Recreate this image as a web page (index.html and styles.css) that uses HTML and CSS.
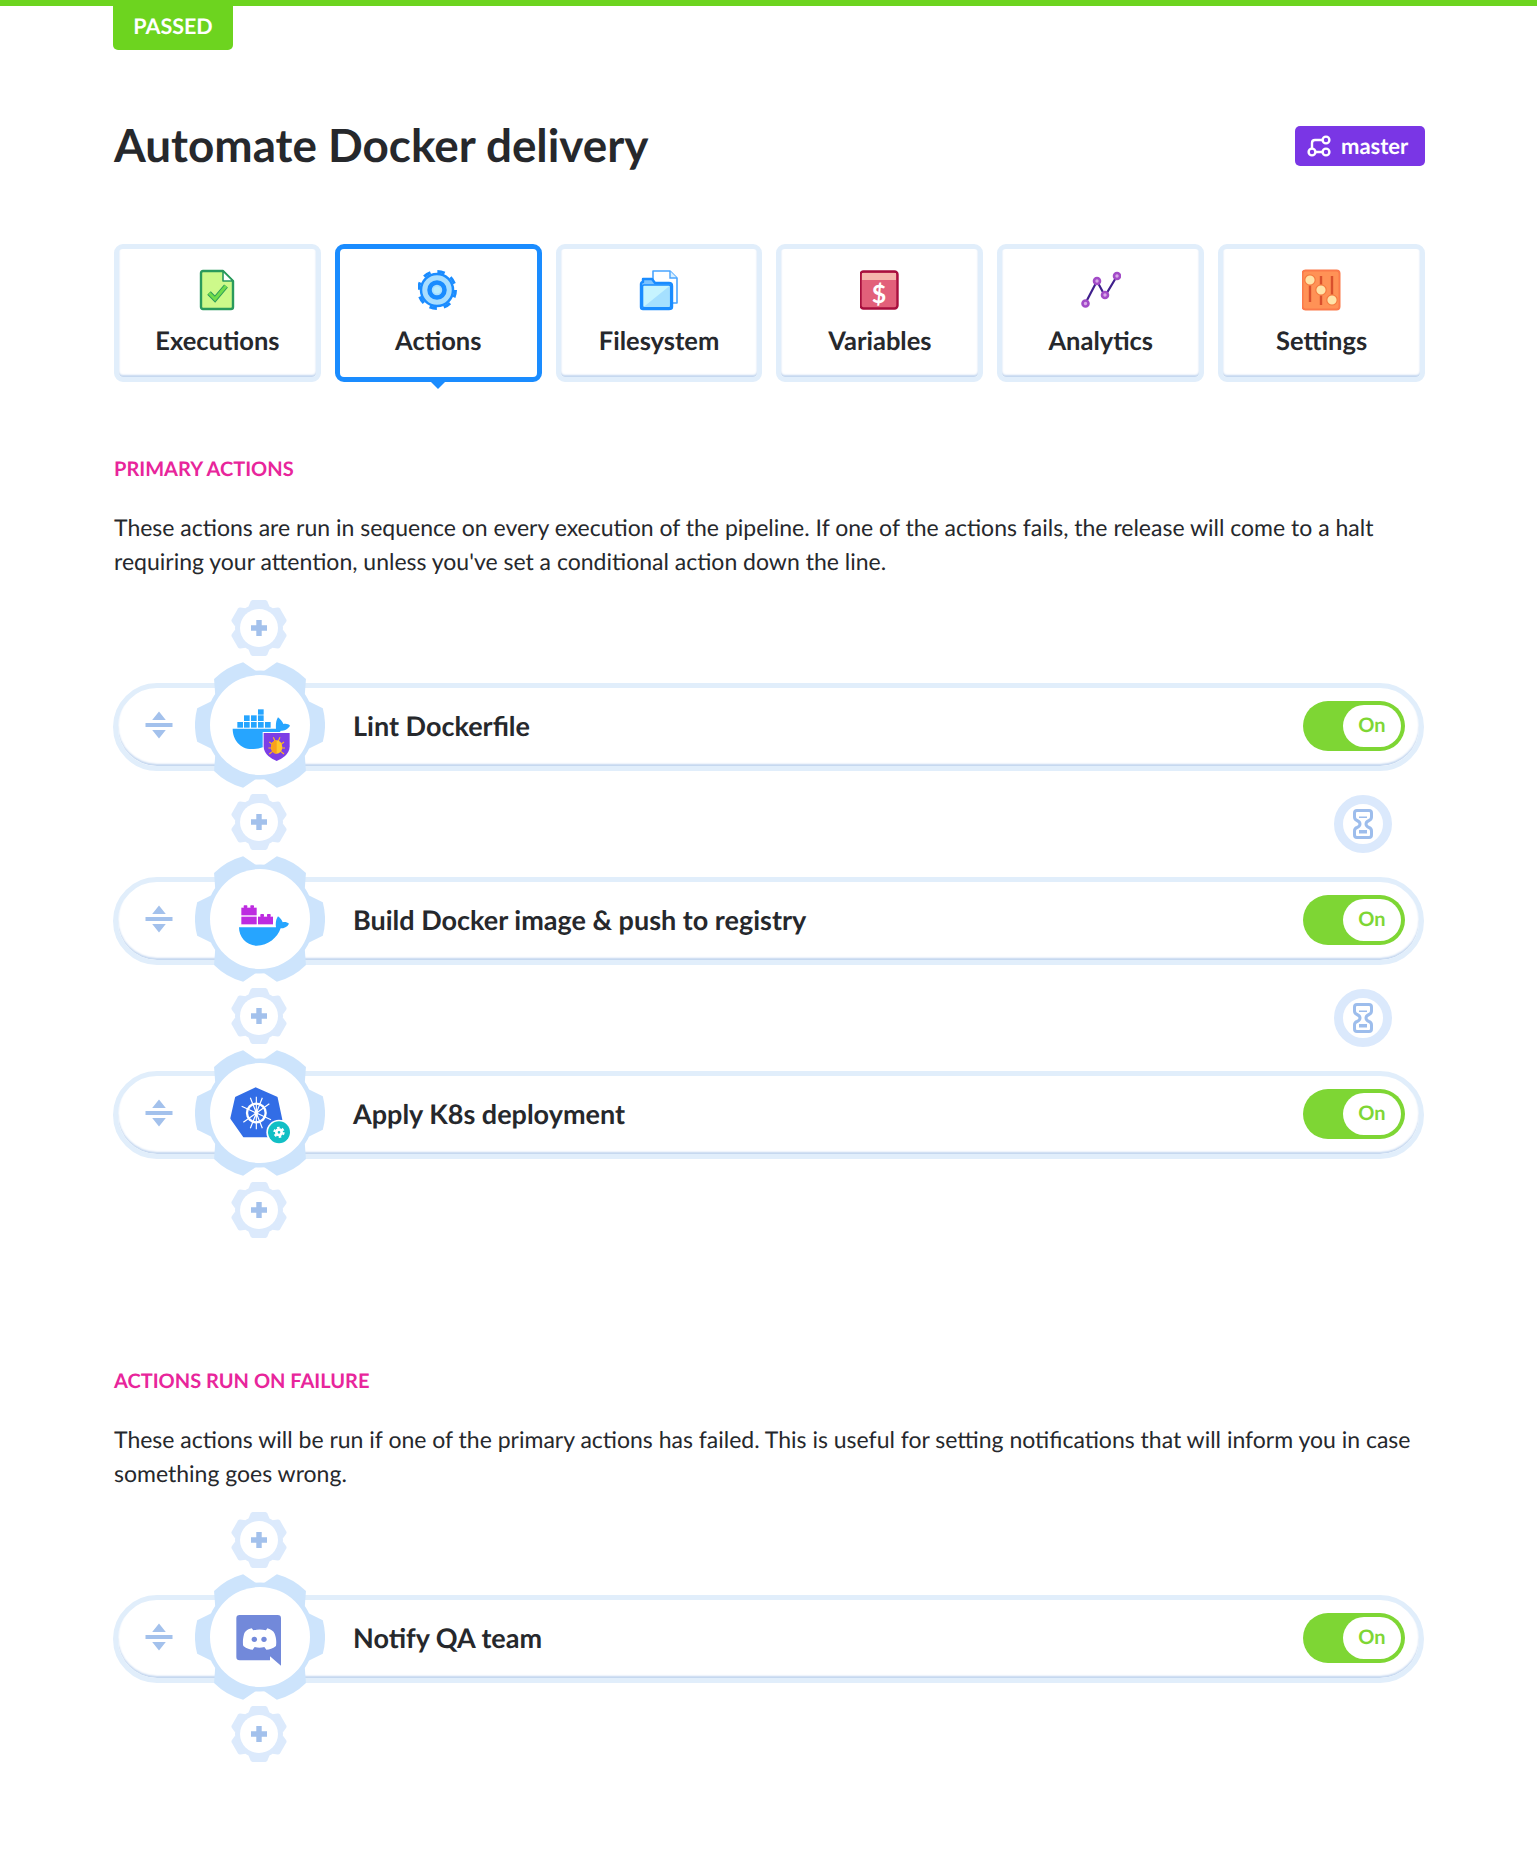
FILE: index.html
```html
<!DOCTYPE html>
<html lang="en">
<head>
<meta charset="utf-8">
<title>Automate Docker delivery</title>
<link rel="stylesheet" href="styles.css">
</head>
<body>
<svg class="defs" width="0" height="0" aria-hidden="true">
  <defs>
    <path id="big-tooth" d="M48.5 -23.7L62.8 -16.8A65 65 0 0 1 62.8 16.8L48.5 23.7Z"/>
    <g id="big-gear">
      <circle r="54.5" fill="#cde4fc"/>
      <use href="#big-tooth" fill="#cde4fc"/>
      <use href="#big-tooth" fill="#cde4fc" transform="rotate(60)"/>
      <use href="#big-tooth" fill="#cde4fc" transform="rotate(120)"/>
      <use href="#big-tooth" fill="#cde4fc" transform="rotate(180)"/>
      <use href="#big-tooth" fill="#cde4fc" transform="rotate(240)"/>
      <use href="#big-tooth" fill="#cde4fc" transform="rotate(300)"/>
      <circle r="50" fill="#fff"/>
    </g>
    <path id="small-tooth" d="M21.4 -10.5L26.4 -8.4Q27.8 -7.8 27.9 -6.3L27.9 6.3Q27.8 7.8 26.4 8.4L21.4 10.5Z"/>
    <symbol id="add-gear" viewBox="-29 -29 58 58">
      <circle r="24" fill="#dceafc"/>
      <use href="#small-tooth" fill="#dceafc" transform="rotate(30)"/>
      <use href="#small-tooth" fill="#dceafc" transform="rotate(90)"/>
      <use href="#small-tooth" fill="#dceafc" transform="rotate(150)"/>
      <use href="#small-tooth" fill="#dceafc" transform="rotate(210)"/>
      <use href="#small-tooth" fill="#dceafc" transform="rotate(270)"/>
      <use href="#small-tooth" fill="#dceafc" transform="rotate(330)"/>
      <circle r="19" fill="#fff"/>
      <path d="M-2.7 -8H2.7V-2.7H8V2.7H2.7V8H-2.7V2.7H-8V-2.7H-2.7Z" fill="#a3c1ec"/>
    </symbol>
    <symbol id="sort" viewBox="0 0 28 28">
      <path d="M14 0.5L20.8 9H7.2Z M0.5 12H27.5V16H0.5Z M7.2 19H20.8L14 27.5Z" fill="#a3c1ec"/>
    </symbol>
    <symbol id="hourglass" viewBox="0 0 20 30">
      <path d="M4 1.5H16Q18.5 1.5 18.5 4V8Q18.5 10.5 16 11.5Q13 12.8 13 15Q13 17.2 16 18.5Q18.5 19.5 18.5 22V26Q18.5 28.5 16 28.5H4Q1.5 28.5 1.5 26V22Q1.5 19.5 4 18.5Q7 17.2 7 15Q7 12.8 4 11.5Q1.5 10.5 1.5 8V4Q1.5 1.5 4 1.5Z" fill="#fff" stroke="#9dbdec" stroke-width="3"/>
      <path d="M6 7.5H14V9H6Z M6 21H14V24.5H6Z" fill="#9dbdec"/>
    </symbol>
  </defs>
</svg>

<div class="topbar"></div>
<main class="page">
  <div class="status">PASSED</div>

  <header class="header">
    <h1 class="title">Automate Docker delivery</h1>
    <div class="branch">
      <svg class="branch-icon" viewBox="0 0 24 22">
        <g fill="none" stroke="#fff" stroke-width="2.4">
          <circle cx="19" cy="5" r="3.4"/>
          <circle cx="5" cy="17" r="3.4"/>
          <circle cx="19" cy="17" r="3.4"/>
          <path d="M8.4 17H15.6M15.6 5H8Q5 5 5 8V13.6"/>
        </g>
      </svg>
      <span>master</span>
    </div>
  </header>

  <nav class="tabs">
    <div class="tab">
      <svg class="tab-icon" viewBox="0 0 40 44">
        <path d="M8 3H26L36 13V39Q36 41 34 41H6Q4 41 4 39V5Q4 3 6 3Z" fill="#cdf98a" stroke="#2a9a5c" stroke-width="2.4" stroke-linejoin="round"/>
        <path d="M26 3V13H36Z" fill="#fff" stroke="#2a9a5c" stroke-width="1.6" stroke-linejoin="round"/>
        <path d="M12 25L18 31L29 18" fill="none" stroke="#2a9a5c" stroke-width="5"/>
        <path d="M12 25L18 31L29 18" fill="none" stroke="#6fdc4a" stroke-width="3"/>
      </svg>
      <span class="tab-label">Executions</span>
    </div>
    <div class="tab tab-active">
      <svg class="tab-icon" viewBox="0 0 40 44">
        <g transform="translate(19 22)">
          <circle r="16" fill="#a8deff" stroke="#1a8cff" stroke-width="2.5"/>
          <circle r="18.5" fill="none" stroke="#1a8cff" stroke-width="3" stroke-dasharray="7.5 7"/>
          <circle r="12.5" fill="#a8deff"/>
          <circle r="7.5" fill="#a8deff" stroke="#1a8cff" stroke-width="4.5"/>
          <circle r="3.6" fill="#b8ecff"/>
        </g>
      </svg>
      <span class="tab-label">Actions</span>
    </div>
    <div class="tab">
      <svg class="tab-icon" viewBox="0 0 40 44">
        <path d="M14 3H31L38 10V35H14Z" fill="#fff" stroke="#4aa5ff" stroke-width="1.6" stroke-linejoin="round"/>
        <path d="M31 3V10H38" fill="#d9f0ff" stroke="#4aa5ff" stroke-width="1.4"/>
        <path d="M4 14Q2 14 2 16V39Q2 41 4 41H30Q33 41 33 39V18Q33 15 30 15H16L13 11H4Z" fill="#7cc3ff" stroke="#1a8cff" stroke-width="2.4" stroke-linejoin="round"/>
        <rect x="3.5" y="17" width="28" height="22.5" rx="1.5" fill="#c6f4ff" stroke="#1a8cff" stroke-width="1.6"/>
        <path d="M4.5 39L30.5 18V39Z" fill="#a5e0ff"/>
      </svg>
      <span class="tab-label">Filesystem</span>
    </div>
    <div class="tab">
      <svg class="tab-icon" viewBox="0 0 40 44">
        <rect x="0.5" y="3.5" width="37" height="37" rx="3" fill="#e2607a" stroke="#a80f3e" stroke-width="2.4"/>
        <rect x="2" y="5" width="34" height="7" fill="#f6b5ad"/>
        <text class="dollar" x="19" y="35" text-anchor="middle">$</text>
      </svg>
      <span class="tab-label">Variables</span>
    </div>
    <div class="tab">
      <svg class="tab-icon" viewBox="0 0 40 44">
        <path d="M4 36L16 13L24 28L36 8" fill="none" stroke="#3f1f8c" stroke-width="2.2"/>
        <g fill="#d8a8e8" stroke="#a24bc7" stroke-width="2.6">
          <circle cx="4.5" cy="35.5" r="3"/>
          <circle cx="16" cy="13" r="3"/>
          <circle cx="24" cy="27" r="3"/>
          <circle cx="36" cy="8" r="3"/>
        </g>
      </svg>
      <span class="tab-label">Analytics</span>
    </div>
    <div class="tab">
      <svg class="tab-icon" viewBox="0 0 40 44">
        <rect x="0.5" y="2.5" width="37" height="39" rx="3" fill="#ff9256" stroke="#fb7a4a" stroke-width="2"/>
        <path d="M8 8V34M19 8V37M30 8V37" stroke="#d9502d" stroke-width="2.4"/>
        <g fill="#ffe3a8" stroke="#f57a3f" stroke-width="1.2">
          <circle cx="8" cy="12" r="5.2"/>
          <circle cx="19" cy="22" r="5.2"/>
          <circle cx="30" cy="32" r="5.2"/>
        </g>
      </svg>
      <span class="tab-label">Settings</span>
    </div>
  </nav>

  <section class="section section-primary">
    <h2 class="section-title">PRIMARY ACTIONS</h2>
    <p class="section-text">These actions are run in sequence on every execution of the pipeline. If one of the actions fails, the release will come to a halt requiring your attention, unless you've set a conditional action down the line.</p>

    <div class="link"><svg class="add"><use href="#add-gear"/></svg></div>

    <div class="action">
      <svg class="sort"><use href="#sort"/></svg>
      <svg class="action-gear" viewBox="-65 -65 130 130">
        <use href="#big-gear"/>
        <g transform="scale(0.3333) translate(-480 -401)">
          <path d="M398 412H528C527 398 528 388 534 378C541 384 548 392 550 398C558 396 566 398 570 403C564 414 552 418 542 418C528 450 495 473 455 473C420 473 398 445 398 412Z" fill="#26a5ff"/>
          <g fill="#26a5ff">
            <rect x="412" y="392" width="17" height="17"/><rect x="432" y="392" width="17" height="17"/><rect x="453" y="392" width="17" height="17"/><rect x="474" y="392" width="17" height="17"/><rect x="495" y="392" width="17" height="17"/>
            <rect x="432" y="372" width="17" height="17"/><rect x="453" y="372" width="17" height="17"/><rect x="474" y="372" width="17" height="17"/>
            <rect x="474" y="354" width="17" height="16"/>
          </g>
          <path d="M491 425H569V465C569 490 545 503 530 509C515 503 491 490 491 465Z" fill="#7c3ee6" stroke="#fff" stroke-width="6" paint-order="stroke"/>
          <path d="M508 452L518 460M552 452L542 460M505 470H515M555 470H545M508 488L518 480M552 488L542 480M520 438L525 449M540 438L535 449" stroke="#ffb818" stroke-width="3.5" fill="none"/>
          <ellipse cx="530" cy="467" rx="17" ry="20" fill="#ffc72a"/>
          <path d="M530 447A17 20 0 0 0 530 487Z" fill="#f9a11b"/>
        </g>
      </svg>
      <span class="action-name">Lint Dockerfile</span>
      <div class="toggle"><span class="toggle-knob">On</span></div>
    </div>

    <div class="link">
      <svg class="add"><use href="#add-gear"/></svg>
      <span class="wait"><svg class="wait-icon"><use href="#hourglass"/></svg></span>
    </div>

    <div class="action">
      <svg class="sort"><use href="#sort"/></svg>
      <svg class="action-gear" viewBox="-65 -65 130 130">
        <use href="#big-gear"/>
        <g transform="scale(0.3333) translate(-210 -172)">
          <path d="M147 197H258C256 185 258 172 264 164C272 170 276 176 278 182C285 180 292 182 297 186C292 196 282 200 272 200C262 228 235 252 200 252C168 252 147 225 147 197Z" fill="#26a5ff"/>
          <g fill="#bd2be0">
            <rect x="154" y="138" width="46" height="23"/><rect x="161" y="131" width="11" height="8" rx="2"/><rect x="181" y="131" width="11" height="8" rx="2"/>
            <rect x="154" y="165" width="46" height="23"/>
            <rect x="204" y="165" width="45" height="23"/><rect x="211" y="157" width="11" height="9" rx="2"/><rect x="231" y="157" width="11" height="9" rx="2"/>
          </g>
        </g>
      </svg>
      <span class="action-name">Build Docker image &amp; push to registry</span>
      <div class="toggle"><span class="toggle-knob">On</span></div>
    </div>

    <div class="link">
      <svg class="add"><use href="#add-gear"/></svg>
      <span class="wait"><svg class="wait-icon"><use href="#hourglass"/></svg></span>
    </div>

    <div class="action">
      <svg class="sort"><use href="#sort"/></svg>
      <svg class="action-gear" viewBox="-65 -65 130 130">
        <use href="#big-gear"/>
        <g transform="scale(0.3333) translate(-210 -192)">
          <path d="M197 118L260 146L274 212L235 262H162L124 208L138 146Z" fill="#326de6" stroke="#326de6" stroke-width="6" stroke-linejoin="round"/>
          <g fill="none" stroke="#fff">
            <circle cx="199" cy="192" r="28" stroke-width="7"/>
            <path d="M199 143V241M155 172L243 212M160 220L238 164M181 238L217 146M217 238L181 146" stroke-width="3.5"/>
          </g>
          <circle cx="199" cy="192" r="6" fill="#fff"/>
          <circle cx="267" cy="250" r="38" fill="#fff"/>
          <circle cx="267" cy="250" r="33" fill="#12bfc5"/>
          <circle cx="267" cy="250" r="8" fill="none" stroke="#fff" stroke-width="8"/>
          <circle cx="267" cy="250" r="14" fill="none" stroke="#fff" stroke-width="6" stroke-dasharray="7.5 7.16"/>
        </g>
      </svg>
      <span class="action-name">Apply K8s deployment</span>
      <div class="toggle"><span class="toggle-knob">On</span></div>
    </div>

    <div class="link"><svg class="add"><use href="#add-gear"/></svg></div>
  </section>

  <section class="section section-failure">
    <h2 class="section-title">ACTIONS RUN ON FAILURE</h2>
    <p class="section-text">These actions will be run if one of the primary actions has failed. This is useful for setting notifications that will inform you in case something goes wrong.</p>

    <div class="link"><svg class="add"><use href="#add-gear"/></svg></div>

    <div class="action">
      <svg class="sort"><use href="#sort"/></svg>
      <svg class="action-gear" viewBox="-65 -65 130 130">
        <use href="#big-gear"/>
        <g transform="scale(0.3333) translate(-210 -198)">
          <path d="M149 132H263Q273 132 273 142V284L240 256V268H149Q139 268 139 258V142Q139 132 149 132Z" fill="#7289da"/>
          <path d="M185 172C170 176 165 182 162 190C158 205 158 218 160 225C170 233 180 236 188 236L194 228C205 231 212 231 223 228L229 236C238 236 248 233 258 225C260 210 258 198 254 188C250 180 244 176 232 172L228 178C215 175 202 175 190 178Z" fill="#fff"/>
          <circle cx="193" cy="205" r="8" fill="#7289da"/>
          <circle cx="222" cy="205" r="8" fill="#7289da"/>
        </g>
      </svg>
      <span class="action-name">Notify QA team</span>
      <div class="toggle"><span class="toggle-knob">On</span></div>
    </div>

    <div class="link"><svg class="add"><use href="#add-gear"/></svg></div>
  </section>
</main>
</body>
</html>
```

FILE: styles.css
```css
* { box-sizing: border-box; }

html, body { margin: 0; padding: 0; background: #fff; }

body {
  font-family: "Lato", "Liberation Sans", sans-serif;
  color: #26282c;
  min-height: 1870px;
  text-rendering: geometricPrecision;
}

.defs { position: absolute; }

.topbar { height: 6px; background: #6dd41f; }

.page { padding: 0 112px 0 114px; }

.status {
  width: 120px;
  height: 44px;
  margin-left: -1px;
  border-radius: 0 0 5px 5px;
  background: #6dd41f;
  color: #fff;
  font-size: 21.5px;
  font-weight: 700;
  line-height: 40px;
  text-align: center;
}

.header {
  display: flex;
  align-items: center;
  justify-content: space-between;
  margin-top: 64px;
  height: 62px;
}

.title {
  margin: 0;
  font-size: 45.8px;
  font-weight: 700;
  line-height: 62px;
}

.branch {
  display: flex;
  align-items: center;
  gap: 10px;
  width: 130px;
  height: 40px;
  margin-top: 1px;
  padding-left: 12px;
  border-radius: 5px;
  background: #7a36e5;
  color: #fff;
  font-size: 22px;
  font-weight: 700;
}

.branch-icon { width: 24px; height: 22px; }

.tabs {
  display: flex;
  gap: 14px;
  margin-top: 68px;
}

.tab {
  position: relative;
  display: flex;
  flex: 1 1 0;
  flex-direction: column;
  align-items: center;
  height: 138px;
  padding-top: 19px;
  border: 5px solid #e1eefb;
  border-radius: 9px;
  background: #fff;
  box-shadow: inset 0 -2px 2px #c3d6ef;
}

.tab-active {
  border-color: #1a8cff;
  box-shadow: none;
}

.tab-active::after {
  content: "";
  position: absolute;
  left: 50%;
  bottom: -12px;
  margin-left: -7px;
  border-width: 7px 7px 0;
  border-style: solid;
  border-color: #1a8cff transparent transparent;
}

.tab-icon { width: 40px; height: 44px; }

.tab-label {
  margin-top: 12px;
  font-size: 25.5px;
  font-weight: 700;
  line-height: 34px;
}

.dollar {
  fill: #fff;
  font-family: "Lato", sans-serif;
  font-size: 25px;
  font-weight: 700;
}

.section-primary { margin-top: 75px; }
.section-failure { margin-top: 104px; }

.section-title {
  margin: 0;
  color: #e8259b;
  font-size: 20px;
  font-weight: 700;
  line-height: 24px;
}

.section-text {
  margin: 29px 0 -1px;
  font-size: 23px;
  line-height: 34px;
}

.link {
  display: flex;
  align-items: center;
  justify-content: space-between;
  height: 106px;
  margin-left: -1px;
  padding: 0 33px 0 117px;
}

.add {
  width: 58px;
  height: 58px;
  margin-bottom: 5px;
}

.wait {
  display: flex;
  align-items: center;
  justify-content: center;
  width: 58px;
  height: 58px;
  border: 9px solid #dbe9fc;
  border-radius: 50%;
  background: #fff;
}

.wait-icon { width: 20px; height: 30px; }

.action {
  display: flex;
  align-items: center;
  height: 88px;
  margin: 0 1px 0 -1px;
  padding: 0 14px 0 27px;
  border: 5px solid #e1eefb;
  border-radius: 44px;
  background: #fff;
  box-shadow: inset 0 -2px 2px #c3d6ef;
}

.sort {
  width: 28px;
  height: 28px;
  margin-bottom: 4px;
}

.action-gear {
  position: relative;
  flex: none;
  width: 130px;
  height: 130px;
  margin: -49px 0 -45px 22px;
}

.action-name {
  margin: 0 0 3px 28px;
  font-size: 27px;
  font-weight: 700;
}

.toggle {
  display: flex;
  justify-content: flex-end;
  align-items: center;
  width: 102px;
  height: 50px;
  margin: 0 0 2px auto;
  padding-right: 4px;
  border-radius: 25px;
  background: #7ed634;
}

.toggle-knob {
  width: 58px;
  height: 42px;
  border-radius: 21px;
  background: #fff;
  color: #7ed634;
  font-size: 20px;
  font-weight: 700;
  line-height: 40px;
  text-align: center;
}
```
